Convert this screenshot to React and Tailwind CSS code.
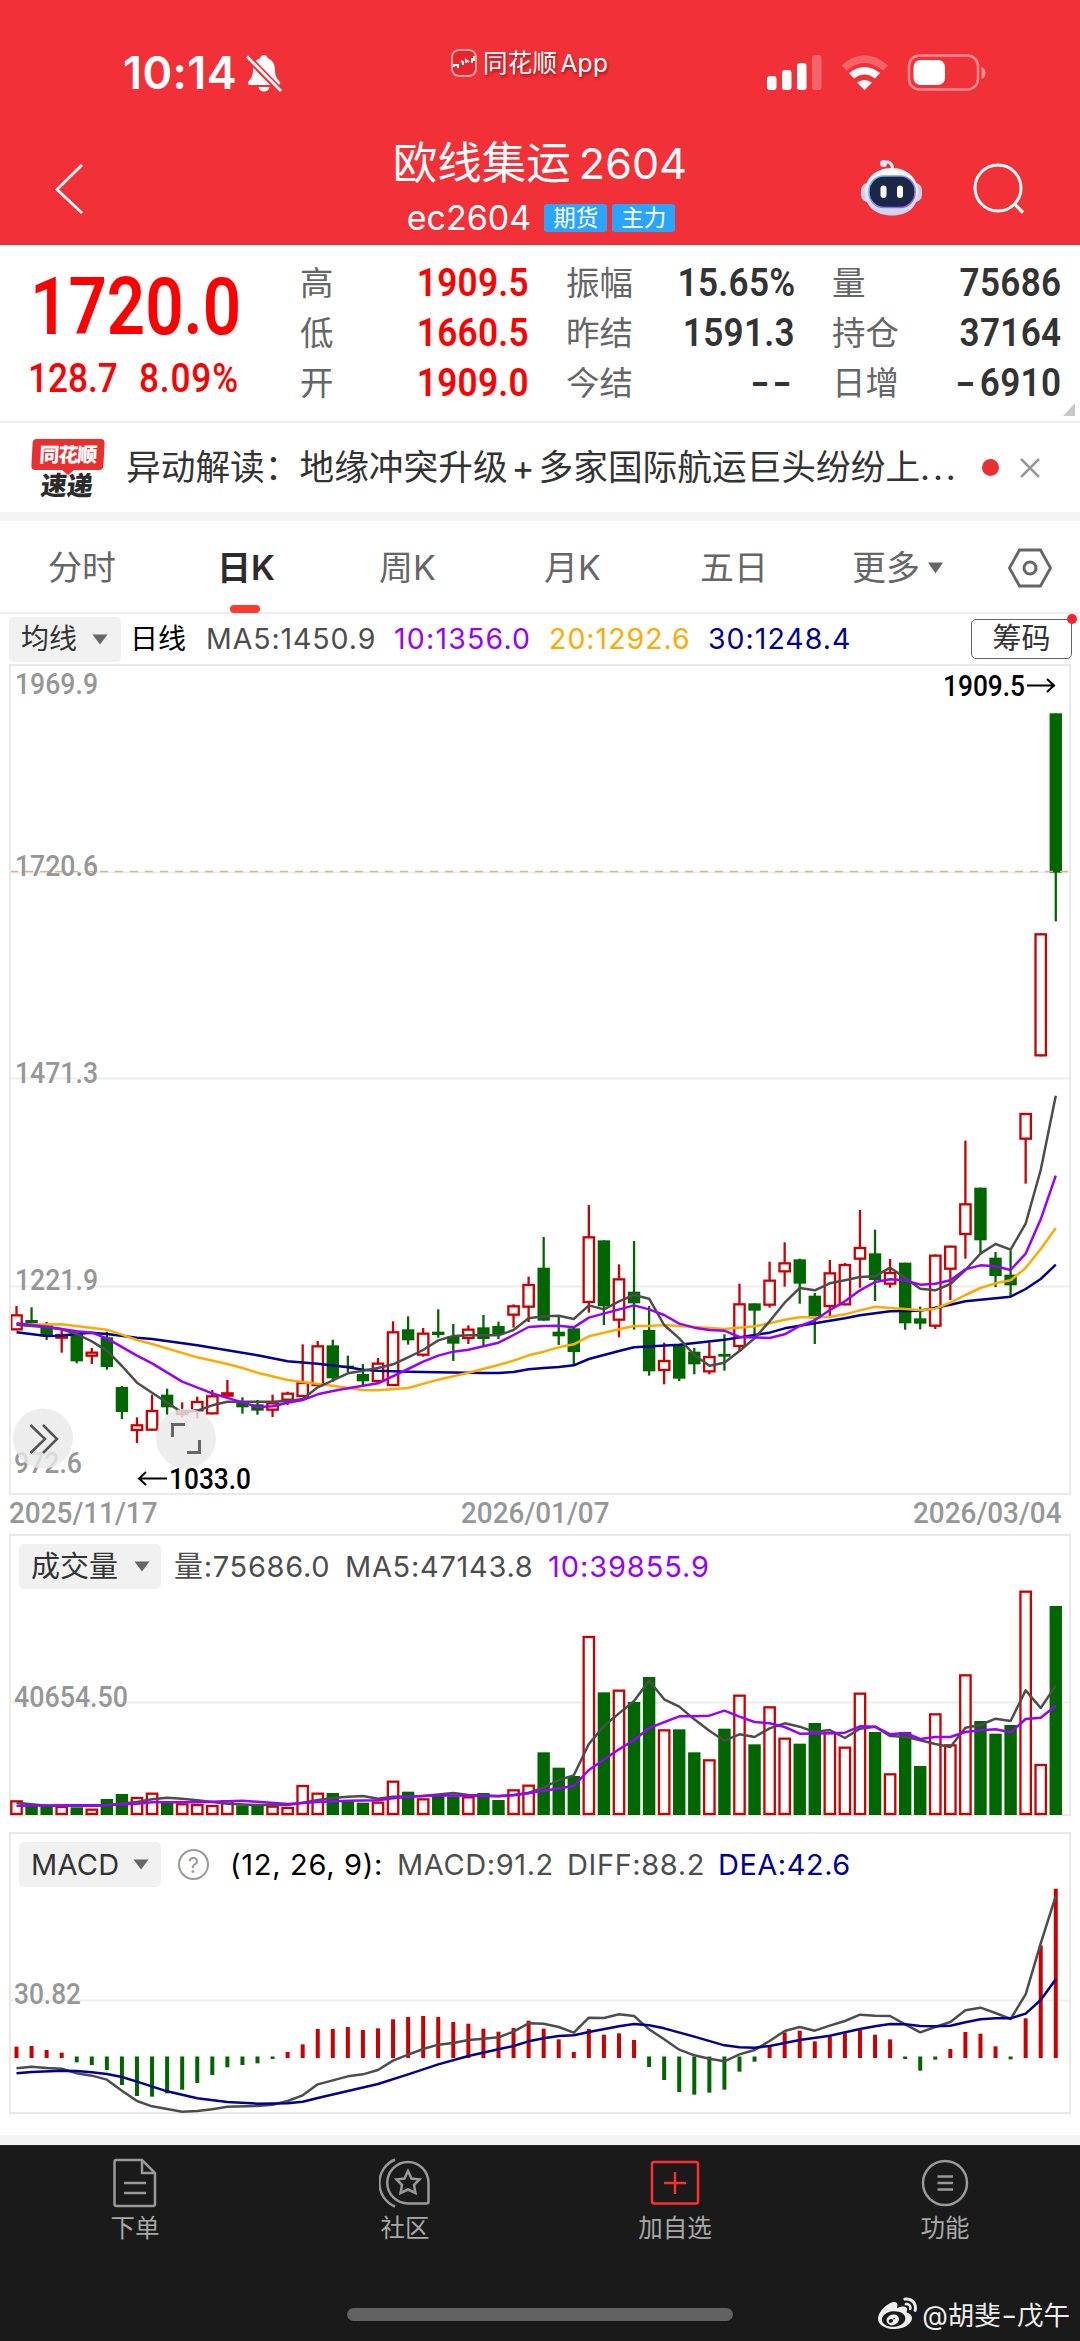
import { FaWeibo } from "react-icons/fa";

const UP = "#cc0000";
const DOWN = "#006600";
const GREY = "#4d4d4d";
const PURPLE = "#9900ff";
const ORANGE = "#ffaa00";
const NAVY = "#000099";

// x of the centre of day i, inside a panel
const px = (i) => 7.5 + i * 15.062;

//! Price candles: [color, high, body top, body bottom, low], 3 units for each pixel ------------
const candlesA = [
  ["r", 318, 343, 391, 391], ["g", 322, 360, 370, 370], ["g", 366, 375, 409, 420], ["r", 390, 402, 416, 458],
  ["g", 398, 403, 484, 490], ["r", 444, 455, 470, 492], ["g", 395, 412, 501, 509], ["g", 558, 561, 636, 657],
  ["r", 652, 673, 693, 729], ["r", 584, 630, 692, 692], ["g", 566, 584, 622, 644], ["r", 607, 630, 645, 652],
  ["r", 590, 603, 634, 655], ["r", 570, 586, 643, 643], ["r", 540, 577, 590, 590], ["g", 592, 606, 622, 641],
  ["g", 600, 613, 632, 644], ["r", 584, 607, 632, 651], ["r", 575, 578, 602, 615], ["r", 433, 546, 591, 591],
  ["r", 423, 436, 558, 558], ["g", 419, 436, 535, 545], ["g", 467, 497, 502, 517], ["g", 492, 522, 544, 557],
  ["r", 474, 488, 546, 546], ["r", 364, 394, 558, 558], ["g", 349, 388, 421, 434], ["r", 384, 398, 467, 470],
  ["g", 328, 395, 405, 413], ["g", 372, 409, 431, 483], ["r", 376, 386, 417, 432], ["g", 345, 382, 417, 437],
  ["g", 365, 378, 403, 417], ["r", 313, 316, 347, 383], ["r", 230, 252, 323, 366],
];
const candlesB = [
  ["g", 411, 503, 662, 662], ["g", 647, 695, 709, 735], ["g", 684, 685, 756, 797], ["r", 315, 409, 609, 638],
  ["g", 421, 421, 619, 675], ["r", 493, 535, 662, 712], ["g", 423, 575, 610, 689], ["g", 618, 690, 814, 827],
  ["r", 728, 780, 813, 853], ["g", 735, 735, 836, 843], ["g", 744, 755, 793, 823], ["r", 728, 768, 817, 823],
  ["g", 703, 762, 770, 812], ["r", 551, 610, 741, 751], ["g", 610, 610, 632, 716], ["r", 485, 539, 617, 623],
  ["r", 427, 487, 517, 560], ["g", 476, 478, 551, 611], ["g", 579, 587, 655, 732], ["r", 480, 517, 621, 649],
  ["r", 489, 492, 616, 616], ["r", 330, 441, 479, 563], ["g", 389, 460, 540, 603], ["r", 477, 516, 554, 563],
  ["g", 488, 488, 670, 689], ["g", 620, 655, 671, 688], ["r", 463, 464, 680, 687], ["r", 437, 437, 509, 600],
  ["r", 122, 310, 405, 476], ["g", 263, 263, 421, 461], ["g", 456, 473, 528, 561], ["g", 452, 524, 556, 588],
  ["r", 39, 39, 119, 251], ["r", -500, -500, -131, -131], ["g", -1160, -1160, -682, -536],
];
const toPanel = (v, base) => v / 3 + base;
const candles = [
  ...candlesA.map(([c, ...v]) => [c, ...v.map((n) => toPanel(n, 536))]),
  ...candlesB.map(([c, ...v]) => [c, ...v.map((n) => toPanel(n, 436))]),
];

// moving averages: [day, y] points, first 36 days then the rest
const averages = [
  {
    color: NAVY,
    a: [[0, 397], [2, 408], [3, 407], [4, 401], [5, 398], [6, 402], [8, 413], [9, 417], [12, 436], [16, 466], [18, 484], [20, 491], [22, 502], [23, 509], [24, 512], [26, 515], [31, 519], [32, 519], [33, 516], [34, 508], [35, 504]],
    b: [[36, 801], [37, 796], [38, 777], [40, 753], [41, 742], [44, 734], [47, 719], [50, 698], [51, 685], [53, 670], [55, 655], [56, 646], [58, 634], [60, 632], [62, 614], [63, 604], [66, 590], [67, 567], [68, 537], [69, 494]],
  },
  {
    color: ORANGE,
    a: [[0, 374], [3, 373], [6, 389], [7, 404], [8, 420], [9, 432], [12, 472], [14, 492], [15, 504], [16, 518], [18, 540], [19, 546], [21, 557], [22, 564], [23, 570], [24, 571], [26, 564], [28, 539], [30, 518], [32, 495], [33, 482], [34, 466], [35, 455]],
    b: [[36, 742], [37, 733], [38, 709], [40, 688], [41, 678], [42, 678], [43, 675], [44, 678], [47, 687], [49, 679], [50, 670], [51, 659], [52, 652], [54, 651], [55, 643], [56, 631], [57, 620], [58, 624], [59, 627], [60, 631], [61, 626], [62, 608], [63, 585], [64, 564], [65, 550], [66, 541], [67, 504], [68, 447], [69, 384]],
  },
  {
    color: GREY,
    a: [[0, 374], [1, 378], [2, 382], [3, 388], [4, 402], [5, 424], [6, 452], [7, 498], [8, 548], [9, 578], [10, 608], [11, 637], [12, 632], [13, 616], [14, 605], [17, 605], [18, 603], [19, 597], [20, 562], [21, 541], [22, 520], [23, 512], [24, 504], [25, 493], [26, 472], [27, 450], [28, 421], [29, 408], [30, 406], [32, 406], [33, 390], [34, 355], [35, 349]],
    b: [[36, 647], [37, 657], [38, 616], [39, 628], [40, 604], [41, 585], [42, 596], [43, 675], [44, 715], [45, 765], [46, 797], [47, 788], [48, 753], [49, 715], [50, 664], [51, 608], [52, 564], [53, 571], [54, 550], [55, 541], [56, 531], [57, 529], [58, 503], [59, 533], [60, 566], [61, 571], [62, 552], [63, 510], [64, 461], [65, 432], [66, 449], [67, 371], [68, 210], [69, -13]],
  },
  {
    color: PURPLE,
    a: [[0, 370], [2, 380], [4, 394], [5, 398], [6, 415], [8, 467], [9, 490], [11, 545], [13, 580], [15, 607], [16, 621], [17, 619], [18, 608], [19, 600], [20, 583], [21, 573], [22, 565], [24, 550], [26, 507], [27, 485], [28, 467], [29, 455], [30, 449], [32, 428], [33, 405], [34, 381], [35, 378]],
    b: [[36, 677], [37, 682], [38, 653], [41, 616], [42, 628], [43, 645], [44, 671], [45, 683], [46, 690], [47, 692], [48, 711], [50, 714], [51, 703], [52, 678], [53, 661], [54, 630], [55, 604], [56, 571], [57, 546], [58, 538], [59, 541], [60, 554], [61, 551], [62, 541], [63, 508], [64, 496], [65, 499], [66, 510], [67, 461], [68, 358], [69, 227]],
  },
];

//! Volume ------------------------------------------------------------------------------------
const volume = [
  841, 858, 858, 858, 862, 866, 837, 822, 831, 818, 849, 850, 852, 855, 841, 856, 855, 857, 861, 795, 818, 819, 841, 848,
  845, 782, 815, 835, 828, 829, 829, 819, 840, 808, 794, 697, 743, 768, 348, 517, 509, 546, 471, 628, 628, 697, 718, 626,
  524, 673, 559, 653, 671, 609, 636, 680, 518, 636, 760, 636, 738, 580, 673, 463, 603, 641, 615, 212, 732, 258,
];
const volumeMa5 = [[0, 848], [1, 853], [2, 857], [4, 857], [5, 858], [6, 856], [8, 846], [9, 838], [10, 833], [11, 836], [12, 841], [14, 851], [16, 855], [18, 855], [19, 848], [20, 840], [21, 834], [22, 830], [23, 828], [24, 836], [25, 830], [27, 828], [29, 819], [30, 825], [32, 828], [33, 825], [34, 818], [35, 803], [36, 780], [37, 766], [38, 672], [39, 618], [40, 580], [41, 543], [42, 482], [43, 538], [44, 560], [45, 598], [46, 632], [47, 662], [48, 643], [49, 651], [50, 625], [51, 610], [52, 620], [53, 636], [54, 630], [55, 654], [56, 626], [57, 620], [58, 648], [59, 650], [60, 661], [61, 672], [62, 681], [63, 623], [64, 615], [65, 596], [66, 603], [67, 511], [68, 564], [69, 497]];
const volumeMa10 = [[0, 857], [6, 855], [8, 851], [9, 847], [12, 847], [15, 842], [18, 852], [20, 846], [22, 842], [24, 841], [25, 835], [26, 830], [28, 826], [32, 829], [33, 826], [34, 820], [35, 812], [37, 798], [38, 750], [40, 688], [41, 660], [42, 624], [44, 589], [45, 589], [46, 587], [47, 572], [48, 590], [49, 606], [50, 610], [51, 621], [52, 641], [54, 640], [55, 638], [56, 619], [57, 620], [58, 643], [59, 639], [60, 657], [61, 651], [62, 651], [63, 636], [64, 631], [65, 628], [66, 637], [67, 597], [68, 593], [69, 557]];

//! MACD --------------------------------------------------------------------------------------
const macd = [
  680, 678, 690, 698, 727, 735, 750, 795, 828, 830, 820, 809, 789, 765, 742, 735, 730, 717, 696, 673, 627, 627, 621, 630,
  625, 598, 591, 588, 591, 606, 611, 626, 635, 624, 602, 626, 658, 696, 627, 644, 640, 660, 741, 780, 816, 824, 818, 809,
  755, 725, 681, 637, 632, 664, 650, 640, 624, 644, 658, 717, 752, 719, 687, 636, 641, 679, 718, 595, 376, 206,
];
const diff = [[0, 745], [1, 740], [2, 744], [3, 746], [4, 760], [5, 767], [6, 779], [7, 812], [8, 843], [9, 859], [10, 867], [11, 875], [12, 873], [13, 868], [14, 860], [16, 858], [17, 854], [18, 843], [19, 826], [20, 793], [21, 781], [22, 769], [23, 763], [24, 750], [25, 722], [26, 704], [27, 687], [28, 674], [29, 669], [30, 660], [31, 656], [32, 652], [33, 635], [34, 610], [35, 611], [36, 621], [37, 638], [38, 593], [39, 594], [40, 583], [41, 588], [42, 628], [43, 658], [44, 689], [45, 706], [46, 716], [47, 724], [48, 703], [49, 690], [50, 663], [51, 633], [52, 621], [53, 632], [54, 617], [55, 603], [56, 584], [57, 587], [58, 588], [59, 613], [60, 637], [61, 621], [62, 606], [63, 571], [64, 563], [65, 579], [66, 597], [67, 523], [68, 370], [69, 228]];
const dea = [[0, 760], [1, 756], [3, 752], [4, 753], [5, 757], [6, 762], [7, 771], [8, 785], [10, 814], [12, 835], [14, 846], [16, 851], [18, 850], [19, 845], [20, 834], [22, 813], [24, 792], [26, 763], [28, 733], [30, 708], [32, 688], [33, 678], [34, 664], [35, 655], [36, 648], [37, 646], [38, 636], [40, 619], [41, 612], [42, 616], [43, 625], [45, 650], [47, 676], [48, 682], [49, 683], [50, 678], [52, 660], [54, 647], [56, 627], [57, 619], [58, 612], [59, 613], [60, 618], [61, 619], [62, 617], [63, 607], [64, 598], [65, 595], [66, 595], [67, 581], [68, 540], [69, 478]];

function Line({ points, color }) {
  return (
    <polyline
      points={points.map(([i, y]) => `${px(i)},${y}`).join(" ")}
      fill="none"
      stroke={color}
      strokeWidth="2.5"
      strokeLinejoin="round"
    />
  );
}

function Bar({ i, up, top, bottom }) {
  return up ? (
    <rect x={px(i) - 5.2} y={top + 1} width="10.4" height={Math.max(bottom - top - 2, 1)} fill="#fff" stroke={UP} strokeWidth="2.3" />
  ) : (
    <rect x={px(i) - 6.2} y={top} width="12.4" height={bottom - top} fill={DOWN} />
  );
}

function AxisText({ x, y, width, children, className = "fill-[#979797] font-medium" }) {
  return (
    <text x={x} y={y} textLength={width} lengthAdjust="spacingAndGlyphs" className={`font-[Roboto] text-[29.5px] ${className}`}>
      {children}
    </text>
  );
}

function PriceChart() {
  return (
    <svg width="1062" height="831" className="block">
      <path d="M2 208.5H1060M2 414.5H1060M2 622.5H1060" stroke="#ededed" strokeWidth="2" />
      {candles.map(([c, high, top, bottom, low], i) => (
        <g key={i}>
          <path d={`M${px(i)} ${high}V${low}`} stroke={c === "r" ? UP : DOWN} strokeWidth="2.3" />
          <Bar i={i} up={c === "r"} top={top} bottom={bottom} />
        </g>
      ))}
      {averages.map(({ color, a, b }) => (
        <Line
          key={color}
          color={color}
          points={[...a.map(([i, y]) => [i, toPanel(y, 536)]), ...b.map(([i, y]) => [i, toPanel(y, 436)])]}
        />
      ))}
      <path d="M1 207.5H1062" stroke="#d9b68c" strokeWidth="1.5" strokeDasharray="8 7" />
      <AxisText x="6" y="29.5" width="83">1969.9</AxisText>
      <AxisText x="6" y="211.5" width="83">1720.6</AxisText>
      <AxisText x="6" y="418.5" width="83">1471.3</AxisText>
      <AxisText x="6" y="626" width="83">1221.9</AxisText>
      <AxisText x="5" y="809" width="68">972.6</AxisText>
      <AxisText x="934" y="32" width="82" className="fill-black font-medium">1909.5</AxisText>
      <path d="M1018 21.5H1046M1038 15L1045 21.5L1038 28" fill="none" stroke="#000" strokeWidth="2" />
      <AxisText x="160" y="825" width="82" className="fill-black font-medium">1033.0</AxisText>
      <path d="M158 814.5H130M137 808L130 814.5L137 821" fill="none" stroke="#000" strokeWidth="2" />

      {/* floating round buttons */}
      <circle cx="34" cy="774.5" r="30" fill="#e9e9e9" fillOpacity="0.82" />
      <path d="M21.5 761L36 775L21.5 789M34 761L48 775L34 789" fill="none" stroke="#555" strokeWidth="2.5" />
      <circle cx="177" cy="774.5" r="30" fill="#e9e9e9" fillOpacity="0.82" />
      <path d="M163.5 773V760.5H176M178 788.5H190.5V776" fill="none" stroke="#666" strokeWidth="3" />
    </svg>
  );
}

function Triangle() {
  return (
    <svg width="16" height="11" className="shrink-0">
      <path d="M0.5 0.5H15.5L8 10.5Z" fill="#666" />
    </svg>
  );
}

function Header() {
  return (
    <header className="h-[245px] bg-[#f23037] text-white">
      <div className="flex h-[100px] items-end pb-[7px]">
        <div className="flex w-[451px] items-center pl-[123px]">
          <span className="w-[113px] text-[45px] leading-[38px] font-semibold tracking-[0.4px]">10:14</span>
          <svg width="38" height="40" viewBox="0 0 38 40" className="ml-[9px]">
            <path d="M19 2c-2 0-3.5 1.5-3.8 3.2C10 7 8 11.5 8 17c0 6-2 8.5-4.5 11.5-1.5 2 0 3.5 1.5 3.5h28c2 0 3-2 1.5-3.5C31.5 25 30 23 30 17c0-5.5-2.5-10-7.2-11.8C22.5 3.5 21 2 19 2ZM13.5 34c.7 3 3 4.5 5.5 4.5s4.8-1.5 5.5-4.5Z" fill="#fff" />
            <path d="M1.8 3.3L35.5 38" stroke="#f23037" strokeWidth="6.5" />
            <path d="M2 3.5L36 38" stroke="#fff" strokeWidth="2.8" />
          </svg>
        </div>
        <div className="mb-[15px] flex w-[300px] items-center">
          <svg width="26" height="28" viewBox="0 0 26 28">
            <rect x="1" y="1" width="24" height="26" rx="7" fill="#e5262d" stroke="#f9a0a3" strokeWidth="2" />
            <path d="M3 18v-2h4v3M10 12l2 1v3M15 14v-3l3 2M21 9v5M23 7v5" stroke="#fff" strokeWidth="2" fill="none" />
          </svg>
          <span className="ml-[6px] text-[24.5px] leading-[30px] tracking-[0.3px] [text-shadow:1px_2px_3px_rgba(90,0,0,0.6)]">同花顺<span className="ml-[3px]">App</span></span>
        </div>
        <div className="flex items-center pl-[16px]">
          <svg width="222" height="40">
            <g fill="#fff">
              <rect x="0" y="23" width="9.5" height="14" rx="3" />
              <rect x="15" y="17" width="9.5" height="20" rx="3" />
              <rect x="30" y="10" width="9.5" height="27" rx="3" />
              <rect x="45" y="2" width="9.5" height="35" rx="3" fillOpacity="0.25" />
            </g>
            <path d="M74.5 12.5Q97.500 -8 121 12.500L116 17.500Q97.500 2.500 79.500 17.500Z" fill="#fff" fillOpacity="0.25" />
            <path d="M82 20Q97.500 8 113 20L108 25.500Q97.500 17.500 87 25.500Z" fill="#fff" />
            <path d="M90 29.500Q97.500 24.500 105 29.500L97.500 37Z" fill="#fff" />
            <rect x="142" y="2.5" width="69" height="34" rx="10.5" fill="none" stroke="#fff" strokeOpacity="0.45" strokeWidth="2.5" />
            <rect x="146.5" y="7" width="31.5" height="25" rx="7" fill="#fff" />
            <path d="M214.5 14q4 1.5 4 6t-4 6z" fill="#fff" fillOpacity="0.45" />
          </svg>
        </div>
      </div>

      <div className="flex h-[145px] items-start">
        <svg width="200" height="145">
          <path d="M82 65L57 89.5L82 113" fill="none" stroke="#fff" strokeWidth="2.8" />
        </svg>
        <div className="flex w-[680px] flex-col items-center">
          <h1 className="mt-[37px] flex items-center gap-[8px] text-[44.5px] leading-[52px] font-normal">
            <span>欧线集运</span>
            <span className="text-[43px] tracking-[0.2px]">2604</span>
          </h1>
          <div className="mt-[13px] ml-[2px] flex items-center">
            <span className="text-[34px] leading-[32px]">ec2604</span>
            <span className="ml-[13px] flex h-[28px] w-[63px] items-center justify-center rounded-[3px] bg-[#2aa5ff] text-[22.5px] leading-none">期货</span>
            <span className="ml-[5px] flex h-[28px] w-[63px] items-center justify-center rounded-[3px] bg-[#2aa5ff] text-[22.5px] leading-none">主力</span>
          </div>
        </div>
        <svg width="200" height="145" className="overflow-visible">
          <defs>
            <linearGradient id="shell" x1="0" y1="0" x2="0" y2="1">
              <stop offset="0" stopColor="#fff" />
              <stop offset="1" stopColor="#cfd0ef" />
            </linearGradient>
            <linearGradient id="rim" x1="0" y1="0" x2="1" y2="1">
              <stop offset="0" stopColor="#56c8e8" />
              <stop offset="1" stopColor="#a04cf2" />
            </linearGradient>
          </defs>
          {/* assistant robot */}
          <path d="M4 62.5q8-2 8.500 6" fill="none" stroke="#f1eefc" strokeWidth="3" />
          <circle cx="3.5" cy="63.5" r="3.500" fill="#e8e6fa" />
          <rect x="-19" y="83" width="61" height="19" rx="7" fill="#cfcff0" />
          <path d="M12 68C28 68 38 79 38 92C38 107 28 115.500 12 115.500S-15 107 -15 92C-15 79 -5 68 12 68Z" fill="url(#shell)" />
          <rect x="-11" y="76" width="46" height="31.5" rx="15" fill="#1c2646" stroke="url(#rim)" strokeWidth="1.5" />
          <rect x="0.5" y="85.500" width="6" height="12.500" rx="3" fill="#fff" />
          <rect x="17" y="85.500" width="6" height="12.500" rx="3" fill="#fff" />
          <circle cx="118" cy="88" r="23" fill="none" stroke="#fff" strokeWidth="3" />
          <path d="M134 103.5L143 112.5" stroke="#fff" strokeWidth="3.2" />
        </svg>
      </div>
    </header>
  );
}

const quotes = [
  [["高", "1909.5", true], ["低", "1660.5", true], ["开", "1909.0", true]],
  [["振幅", "15.65%"], ["昨结", "1591.3"], ["今结", "--"]],
  [["量", "75686"], ["持仓", "37164"], ["日增", "-6910"]],
];

function QuoteValue({ value, up }) {
  if (value === "--") {
    return <span className="origin-right scale-x-[1.35] font-[Roboto] text-[39px] leading-[50px] font-semibold tracking-[2px] text-[#333]">--</span>;
  }
  return (
    <span className={`origin-right scale-x-[0.89] font-[Roboto] text-[39.5px] leading-[50px] font-semibold tracking-[0.3px] ${up ? "text-[#ff0000]" : "text-[#333]"}`}>
      {value[0] === "-" ? <span className="mr-[4px] inline-block origin-right scale-x-[1.6]">-</span> : null}
      {value.replace("-", "")}
    </span>
  );
}

function Quote() {
  return (
    <section className="relative flex h-[178px] border-b-2 border-[#eeeeee]">
      <div className="w-[300px] pt-[25px] pl-[30px] text-[#ff0000]">
        <div className="w-max origin-left scale-x-[0.84] font-[Roboto] text-[80px] leading-[75px] font-semibold">1720.0</div>
        <div className="-ml-[2px] mt-[12px] flex w-max origin-left scale-x-[0.88] gap-[24px] font-[Roboto] text-[40px] leading-[44px] font-medium">
          <span>128.7</span>
          <span className="tracking-[1px]">8.09%</span>
        </div>
      </div>
      <div className="flex gap-[37px] pt-[13px]">
        {quotes.map((col, c) => (
          <div key={c} className="w-[229px]">
            {col.map(([label, value, up]) => (
              <div key={label} className="flex h-[50px] items-center justify-between">
                <span className="text-[33.5px] leading-[50px] text-[#666]">{label}</span>
                <QuoteValue value={value} up={up} />
              </div>
            ))}
          </div>
        ))}
      </div>
      <svg width="12" height="13" className="absolute right-[5px] bottom-[5px]"><path d="M12 0V13H0Z" fill="#c8c8c8" /></svg>
    </section>
  );
}

function News() {
  return (
    <section className="flex h-[98px] items-center border-b-[9px] border-[#f4f4f4]">
      <div className="ml-[31px] flex w-[73px] flex-col items-center">
        <div className="flex h-[31px] w-[72px] -skew-x-3 items-center justify-center rounded-[4px] bg-[#e93030] text-[20px] leading-none font-black tracking-[-1px] text-white">同花顺</div>
        <svg width="12" height="5"><path d="M0 0H12L6 5Z" fill="#e93030" /></svg>
        <div className="-skew-x-6 text-[26px] leading-[22px] font-black text-[#2c2c2c]">速递</div>
      </div>
      <div className="ml-[22px] w-[833px] pb-[2px] text-[34.7px] leading-[48px] whitespace-nowrap text-[#333]">
        异动解读：地缘冲突升级<span className="mx-[4px]">+</span>多家国际航运巨头纷纷上<span className="tracking-[2.8px]">...</span>
      </div>
      <div className="ml-[23px] size-[17px] rounded-full bg-[#e92f32]" />
      <svg width="22" height="22" className="ml-[20px]">
        <path d="M2 2L20 20M20 2L2 20" stroke="#999" strokeWidth="2.5" />
      </svg>
    </section>
  );
}

function Tabs() {
  return (
    <nav className="flex h-[93px] items-center border-b-2 border-[#eeeeee] pt-[2px] text-[34px] leading-[50px] text-[#666]">
      <div className="w-[172px] pl-[48px]">分时</div>
      <div className="relative w-[160px] pl-[45px] font-semibold text-[#2c2c2c]">
        日K
        <div className="absolute top-[62px] left-[58px] h-[8px] w-[30px] rounded-[4px] bg-[#ff3b30]" />
      </div>
      <div className="w-[166px] pl-[47px]">周K</div>
      <div className="w-[155px] pl-[46px]">月K</div>
      <div className="w-[152px] pl-[47px]">五日</div>
      <div className="flex w-[203px] items-center pl-[47px]">
        更多
        <svg width="16" height="12" className="ml-[8px]"><path d="M0 0.5H15L7.5 11.5Z" fill="#666" /></svg>
      </div>
      <svg width="44" height="40" viewBox="0 0 44 40">
        <path d="M11.5 2H32.5L42.5 20L32.5 38H11.5L1.5 20Z" fill="none" stroke="#666" strokeWidth="2.8" />
        <circle cx="22" cy="20" r="6" fill="none" stroke="#666" strokeWidth="3" />
      </svg>
    </nav>
  );
}

function Indicators() {
  return (
    <div className="flex h-[50px] items-center pl-[9px] text-[28px] leading-[40px]">
      <div className="flex h-[45px] w-[112px] items-center gap-[15px] rounded-[5px] bg-[#f1f1f1] pl-[12px] text-[#333]">
        均线
        <Triangle />
      </div>
      <span className="ml-[9px] w-[76px] text-[28px] text-black">日线</span>
      <span className="w-[188px] text-[28.5px] tracking-[0.9px] text-[#4d4d4d]">MA5:1450.9</span>
      <span className="w-[155px] text-[28.5px] tracking-[1.2px] text-[#9900ff]">10:1356.0</span>
      <span className="w-[159px] text-[28.5px] tracking-[1px] text-[#ffaa00]">20:1292.6</span>
      <span className="w-[263px] text-[28.5px] tracking-[1px] text-[#000099]">30:1248.4</span>
      <div className="relative flex h-[40px] w-[101px] items-center justify-center rounded-[5px] border-[1.5px] border-[#666] text-[29px] text-[#333]">
        筹码
        <div className="absolute -top-[6px] -right-[6px] size-[10px] rounded-full bg-[#ff1f2d]" />
      </div>
    </div>
  );
}

function Dates() {
  return (
    <div className="flex h-[39px] justify-between px-[9px] font-[Roboto] text-[29.5px] leading-[36px] font-medium text-[#979797]">
      <span className="w-[148px] origin-left scale-x-[0.945]">2025/11/17</span>
      <span className="w-[148px] origin-left scale-x-[0.945]">2026/01/07</span>
      <span className="mr-[10px] w-[148px] origin-left scale-x-[0.945]">2026/03/04</span>
    </div>
  );
}

function VolumePanel() {
  return (
    <section className="relative mx-[9px] h-[282px] border-2 border-[#e9e9e9]">
      <svg width="1062" height="282" className="absolute -top-[2px] -left-[2px]">
        <path d="M2 168.5H1060" stroke="#ededed" strokeWidth="2" />
        {volume.map((v, i) => (
          <Bar key={i} i={i} up={candles[i][0] === "r"} top={v / 3 - 14} bottom={281} />
        ))}
        <Line points={volumeMa5.map(([i, y]) => [i, y / 3 - 14])} color={GREY} />
        <Line points={volumeMa10.map(([i, y]) => [i, y / 3 - 14])} color={PURPLE} />
        <AxisText x="5" y="173" width="114">40654.50</AxisText>
      </svg>
      <div className="flex items-center pt-[8px] pl-[8px] text-[29px] leading-[45px] tracking-[0.7px] text-[#4d4d4d]">
        <div className="flex h-[45px] w-[142px] items-center gap-[16px] rounded-[5px] bg-[#f1f1f1] pl-[12px] tracking-normal text-[#333]">
          成交量
          <Triangle />
        </div>
        <span className="ml-[13px] w-[171px]">量:75686.0</span>
        <span className="w-[203px]">MA5:47143.8</span>
        <span className="tracking-[0.9px] text-[#9900ff]">10:39855.9</span>
      </div>
    </section>
  );
}

function MacdPanel() {
  return (
    <section className="relative mx-[9px] mt-[16px] h-[282px] border-2 border-[#e9e9e9]">
      <svg width="1062" height="282" className="absolute -top-[2px] -left-[2px]">
        <path d="M2 168.5H1060" stroke="#ededed" strokeWidth="2" />
        {macd.map((v, i) => (
          <path key={i} d={`M${px(i)} ${v < 712 ? 226 : 224.5}V${v / 3 - 12}`} stroke={v < 712 ? UP : DOWN} strokeWidth="4" />
        ))}
        <Line points={diff.map(([i, y]) => [i, y / 3 - 12])} color={GREY} />
        <Line points={dea.map(([i, y]) => [i, y / 3 - 12])} color={NAVY} />
        <AxisText x="5" y="172" width="67">30.82</AxisText>
      </svg>
      <div className="flex items-center pt-[8px] pl-[8px] text-[29px] leading-[45px] tracking-[0.3px] text-[#4d4d4d]">
        <div className="flex h-[45px] w-[142px] items-center gap-[13px] rounded-[5px] bg-[#f1f1f1] pl-[12px] text-[#333]">
          MACD
          <Triangle />
        </div>
        <div className="ml-[17px] flex size-[31px] items-center justify-center rounded-full border-2 border-[#999] text-[22px] leading-none text-[#999]">?</div>
        <span className="ml-[21px] w-[167px] tracking-[0.7px] text-black">(12, 26, 9):</span>
        <span className="w-[170px] tracking-[0.6px]">MACD:91.2</span>
        <span className="w-[151px] tracking-[0.6px]">DIFF:88.2</span>
        <span className="tracking-[0.5px] text-[#000099]">DEA:42.6</span>
      </div>
    </section>
  );
}

function Footer() {
  return (
    <footer className="relative flex h-[196px] flex-col border-t border-[#222] bg-[#1a1a1a] text-[24.5px] text-[#a8a8a8]">
      <div className="grid grid-cols-4 pt-[11px]">
        <div className="flex flex-col items-center">
          <svg width="52" height="52" viewBox="0 0 52 52" fill="none" stroke="#999" strokeWidth="2.5">
            <path d="M7.5 3H33L46 16V47Q46 49 44 49H7.5Q5.5 49 5.5 47V5Q5.5 3 7.5 3ZM33 3V16H46M15 26H37M15 36H37" />
          </svg>
          <span className="mt-[1px] leading-[36px]">下单</span>
        </div>
        <div className="flex flex-col items-center">
          <svg width="52" height="52" viewBox="0 0 52 52" fill="none" stroke="#999" strokeWidth="2.5">
            <path d="M16 2.5A25.500 25.500 0 0 0 16 49.500" />
            <path d="M29 5A20.500 20.500 0 0 0 29 46.500H47.500Q49.500 46.500 49.500 44.500V26A20.500 21 0 0 0 29 5Z" />
            <path d="M29 14L32.500 21.500L40.500 22.500L35 28L36.500 36L29 32.500L21.500 36L23 28L17.500 22.500L25.500 21.500Z" />
          </svg>
          <span className="mt-[1px] leading-[36px]">社区</span>
        </div>
        <div className="flex flex-col items-center">
          <svg width="52" height="52" viewBox="0 0 52 52" fill="none" stroke="#ff2d2d" strokeWidth="2.5">
            <rect x="3" y="5" width="46" height="41.5" rx="2" />
            <path d="M26 15V37M15 26H37" />
          </svg>
          <span className="mt-[1px] leading-[36px]">加自选</span>
        </div>
        <div className="flex flex-col items-center">
          <svg width="52" height="52" viewBox="0 0 52 52" fill="none" stroke="#999" strokeWidth="2.5">
            <circle cx="26" cy="26" r="22" />
            <path d="M18.5 19.5H34M18.5 26H34M18.5 32.5H34" />
          </svg>
          <span className="mt-[1px] leading-[36px]">功能</span>
        </div>
      </div>
      <div className="mx-auto mt-[62px] h-[13px] w-[386px] rounded-full bg-[#626262]" />
      <div className="absolute right-[10px] bottom-[7px] flex items-center gap-[5px] text-[26.5px] leading-[36px] text-[#eee]">
        <FaWeibo className="size-[39px]" />
        <span>@胡斐<span className="mx-[2px] inline-block scale-x-[1.3]">-</span>戊午</span>
      </div>
    </footer>
  );
}

export default function App() {
  return (
    <div className="h-[2341px] w-[1080px] overflow-hidden bg-white font-[Inter,'Noto_Sans_CJK_SC',sans-serif]">
      <Header />
      <Quote />
      <News />
      <Tabs />
      <Indicators />
      <div className="mx-[9px] h-[831px] outline-2 -outline-offset-2 outline-[#e9e9e9]">
        <PriceChart />
      </div>
      <Dates />
      <VolumePanel />
      <MacdPanel />
      <div className="mt-[21px] h-[10px] bg-[#f4f4f4]" />
      <Footer />
    </div>
  );
}
